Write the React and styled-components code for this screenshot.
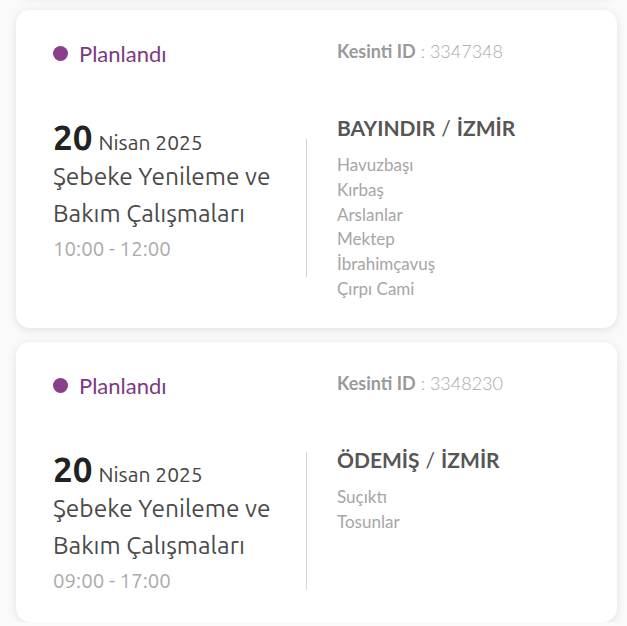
import React from 'react';
import styled, { createGlobalStyle } from 'styled-components';

const GlobalStyle = createGlobalStyle`
  html, body {
    margin: 0;
    padding: 0;
    background: #fafafa;
    overflow: hidden;
  }
`;

const outages = [
  {
    id: '3347290',
    day: '20',
    month: 'Nisan 2025',
    title: 'Şebeke Yenileme ve Bakım Çalışmaları',
    time: '08:00 - 10:00',
    place: 'TİRE / İZMİR',
    areas: ['Yeni', 'Dere'],
  },
  {
    id: '3347348',
    day: '20',
    month: 'Nisan 2025',
    title: 'Şebeke Yenileme ve Bakım Çalışmaları',
    time: '10:00 - 12:00',
    place: 'BAYINDIR / İZMİR',
    areas: ['Havuzbaşı', 'Kırbaş', 'Arslanlar', 'Mektep', 'İbrahimçavuş', 'Çırpı Cami'],
  },
  {
    id: '3348230',
    day: '20',
    month: 'Nisan 2025',
    title: 'Şebeke Yenileme ve Bakım Çalışmaları',
    time: '09:00 - 17:00',
    place: 'ÖDEMİŞ / İZMİR',
    areas: ['Suçıktı', 'Tosunlar'],
  },
];

const List = styled.div`
  display: flex;
  flex-direction: column;
  gap: 14px;
  padding: 0 10px 0 16px;
  margin-top: -284px;
`;

const Card = styled.div`
  background: #fff;
  border-radius: 14px;
  box-shadow: 0 2px 10px rgba(0, 0, 0, 0.1);
  padding: 28px 37px 28px 37px;
  height: ${(p) => p.h}px;
  box-sizing: border-box;
`;

const Header = styled.div`
  display: grid;
  grid-template-columns: 254px 1fr;
  align-items: start;
  height: 30px;
`;

const Status = styled.div`
  display: flex;
  align-items: center;
  gap: 11px;
  height: 30px;
  font-family: 'Lato', sans-serif;
  font-size: 22px;
  color: #7b3a80;
`;

const Dot = styled.span`
  width: 15px;
  height: 15px;
  border-radius: 50%;
  background: #8b3f8a;
`;

const OutageId = styled.div`
  padding-left: 30px;
  font-family: 'Lato', sans-serif;
  font-size: 18px;
  line-height: 26px;
  color: #a9a9a9;
  font-weight: 300;
  b {
    font-weight: 700;
    color: #9a9a9a;
  }
`;

const Body = styled.div`
  display: grid;
  grid-template-columns: 253px 1px 1fr;
  margin-top: 46px;
`;

const DateCol = styled.div`
  padding-top: 4px;
  font-family: 'Ubuntu', 'Open Sans', sans-serif;
`;

const DateLine = styled.div`
  line-height: 38px;
  color: #444;
  font-size: 21px;
  b {
    font-size: 35px;
    font-weight: 700;
    color: #222;
    margin-right: 6px;
  }
`;

const Title = styled.div`
  font-size: 24.5px;
  line-height: 37px;
  color: #4a4a4a;
  margin-top: -3px;
  padding-right: 10px;
`;

const Time = styled.div`
  font-size: 20.5px;
  line-height: 30px;
  margin-top: 2px;
  color: #ababab;
`;

const Divider = styled.div`
  align-self: center;
  width: 1px;
  height: 138px;
  background: #d6d6d6;
`;

const PlaceCol = styled.div`
  padding-left: 30px;
  font-family: 'Lato', sans-serif;
`;

const Place = styled.div`
  font-size: 21px;
  line-height: 28px;
  font-weight: 700;
  color: #565656;
  span {
    font-weight: 400;
    margin: 0 6px;
  }
`;

const Areas = styled.ul`
  list-style: none;
  margin: 11px 0 0;
  padding: 0;
  li {
    font-size: 17px;
    line-height: 24.8px;
    color: #a6a6a6;
  }
`;

function OutageCard({ o }) {
  const [city, province] = o.place.split(' / ');
  const h = o.areas.length > 4 ? 318 : 280;
  return (
    <Card h={h}>
      <Header>
        <Status>
          <Dot />
          Planlandı
        </Status>
        <OutageId>
          <b>Kesinti ID</b> : {o.id}
        </OutageId>
      </Header>
      <Body>
        <DateCol>
          <DateLine>
            <b>{o.day}</b>
            {o.month}
          </DateLine>
          <Title>{o.title}</Title>
          <Time>{o.time}</Time>
        </DateCol>
        <Divider />
        <PlaceCol>
          <Place>
            {city}
            <span>/</span>
            {province}
          </Place>
          <Areas>
            {o.areas.map((a) => (
              <li key={a}>{a}</li>
            ))}
          </Areas>
        </PlaceCol>
      </Body>
    </Card>
  );
}

export default function App() {
  return (
    <>
      <GlobalStyle />
      <List>
        {outages.map((o) => (
          <OutageCard key={o.id} o={o} />
        ))}
      </List>
    </>
  );
}
